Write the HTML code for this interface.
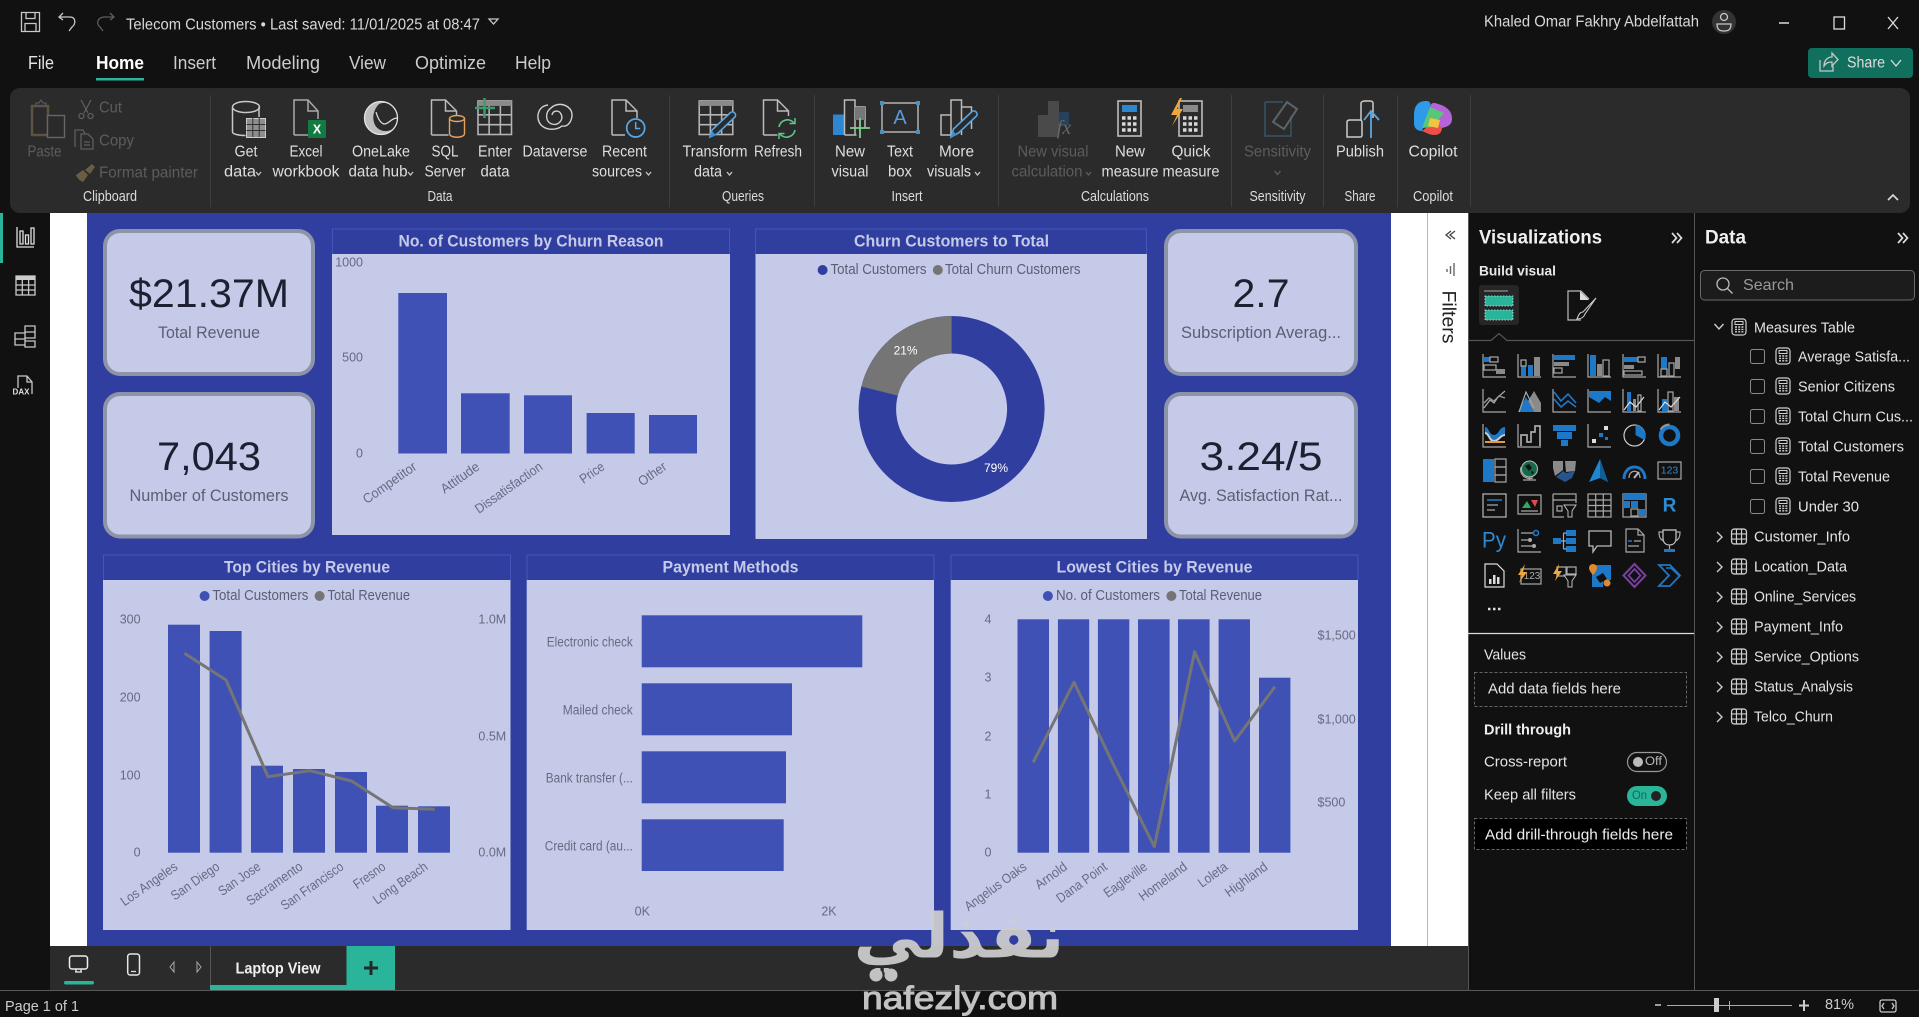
<!DOCTYPE html>
<html lang="en"><head><meta charset="utf-8"><title>Telecom Customers - Power BI</title>
<style>
html,body{margin:0;padding:0;width:1919px;height:1017px;overflow:hidden;background:#111;font-family:"Liberation Sans",sans-serif}
.a{position:absolute}
svg{position:absolute;left:0;top:0}
text{font-family:"Liberation Sans","DejaVu Sans",sans-serif;dominant-baseline:central;fill:#e4e4e4;font-size:15px}
.m{text-anchor:middle}.e{text-anchor:end}.b{font-weight:bold}
.r{font-size:15.5px;fill:#dedede}.d{fill:#5c5c5c}.gl{font-size:14.5px;fill:#dcdcdc}
.t{font-size:17px;font-weight:bold;fill:#c5cae9;text-anchor:middle;translate:0 1px}
.ax{font-size:12.5px;fill:#666b80}.ax[textLength]{font-size:13.5px}.lg{font-size:14.5px;fill:#5a5f75}
.v{font-size:40px;fill:#1c2030;text-anchor:middle;translate:0 1px}.l{font-size:16.5px;fill:#5a5f73;text-anchor:middle;translate:0 1px}
.bar{fill:#3f51b5}.ln{fill:none;stroke:#757575;stroke-width:3;stroke-linejoin:round}
.s{fill:none;stroke:#c8c8c8;stroke-width:1.3}.sd{fill:none;stroke:#5e5e5e;stroke-width:1.3}
.g{fill:none;stroke:#a8a8a8;stroke-width:1.2}.bl{fill:#1e78c8}.gr{fill:#8a8a8a}.bs{fill:none;stroke:#1e78c8;stroke-width:1.6}
</style></head><body>
<div class="a" style="left:10px;top:88px;width:1900px;height:125px;background:#2b2b2b;border-radius:10px"></div>
<div class="a" style="left:50px;top:213px;width:1418px;height:733px;background:#fff"></div>
<div class="a" style="left:87px;top:213px;width:1304px;height:733px;background:#303f9f"></div>
<div class="a" style="left:1427px;top:213px;width:1px;height:733px;background:#b5b5b5"></div>
<div class="a" style="left:50px;top:946px;width:1418px;height:44px;background:#2b2b2b"></div>
<div class="a" style="left:0;top:990px;width:1919px;height:1px;background:#5a5a5a"></div>
<div class="a" style="left:1468px;top:213px;width:1px;height:777px;background:#555"></div>
<div class="a" style="left:1694px;top:213px;width:1px;height:777px;background:#555"></div>
<div class="a" style="left:0;top:213px;width:3px;height:50px;background:#2ab59b"></div>
<div class="a" style="left:1808px;top:48px;width:105px;height:30px;background:#10705d;border-radius:4px"></div>

<svg width="1919" height="1017" viewBox="0 0 1919 1017" xmlns="http://www.w3.org/2000/svg">
<defs>
<symbol id="calc" viewBox="0 0 16 18"><rect x="1" y="1" width="14" height="16" rx="3" fill="none" stroke="#d0d0d0" stroke-width="1.2"/><rect x="4" y="3.5" width="8" height="3" fill="none" stroke="#d0d0d0"/><path d="M4 9h2M7.2 9h2M10.4 9h2M4 11.4h2M7.2 11.4h2M10.4 11.4h2M4 13.8h2M7.2 13.8h2M10.4 13.8h2" stroke="#d0d0d0" stroke-width="1.4"/></symbol>
<symbol id="tbl" viewBox="0 0 16 16"><rect x="1" y="1" width="14" height="14" rx="2.5" fill="none" stroke="#d0d0d0" stroke-width="1.2"/><path d="M5.6 1v14M10.4 1v14M1 5.6h14M1 10.4h14" stroke="#d0d0d0" stroke-width="1.1"/></symbol>
<symbol id="rib-table" viewBox="0 0 36 36"><rect x="1" y="1" width="34" height="34" fill="none" stroke="#b5b5b5" stroke-width="1.6"/><rect x="1" y="1" width="34" height="5" fill="#8a8a8a"/><path d="M12.3 6v29M23.7 6v29M1 15h34M1 25h34" stroke="#b5b5b5" stroke-width="1.6"/></symbol>
</defs>

<!-- title bar -->
<path class="s" d="M21.5 12.5h18v19h-18zM26 12.5v6h9v-6M25 31.500v-8h11v8"/>
<path class="s" d="M63 13l-4 4 4 3M59 17h11c6 0 6 7 2 10l-3 4" stroke-width="1.4"/>
<path class="sd" d="M110 13l4 4-4 3M114 17h-9c-8 0-9 7-5 10l3 4" stroke-width="1.4"/>
<text x="126" y="25" textLength="354" lengthAdjust="spacingAndGlyphs" style="font-size:15.5px;fill:#d8d8d8">Telecom Customers • Last saved: 11/01/2025 at 08:47</text>
<path class="s" d="M489 19h9l-4.500 5z"/>
<text x="1484" y="22" textLength="215" lengthAdjust="spacingAndGlyphs" style="font-size:15.5px;fill:#d8d8d8">Khaled Omar Fakhry Abdelfattah</text>
<circle cx="1724" cy="22" r="12" fill="#333"/><circle cx="1724" cy="17" r="3.500" class="s"/><path class="s" d="M1717 24h14c0 6-3 7-7 7s-7-1-7-7z"/>
<path d="M1779 23h10" stroke="#ddd" stroke-width="1.500"/><rect x="1834" y="17" width="10.500" height="12" class="s" style="stroke:#ddd"/>
<path d="M1888 17l10 12M1898 17l-10 12" stroke="#ddd" stroke-width="1.300"/>
<text x="28" y="63" textLength="26" lengthAdjust="spacingAndGlyphs" style="font-size:18px">File</text>
<text x="96" y="63" textLength="48" lengthAdjust="spacingAndGlyphs" class="b" style="font-size:18px;fill:#fff">Home</text>
<text x="173" y="63" textLength="43" lengthAdjust="spacingAndGlyphs" style="font-size:18px;fill:#ccc">Insert</text>
<text x="246" y="63" textLength="74" lengthAdjust="spacingAndGlyphs" style="font-size:18px;fill:#ccc">Modeling</text>
<text x="349" y="63" textLength="37" lengthAdjust="spacingAndGlyphs" style="font-size:18px;fill:#ccc">View</text>
<text x="415" y="63" textLength="71" lengthAdjust="spacingAndGlyphs" style="font-size:18px;fill:#ccc">Optimize</text>
<text x="515" y="63" textLength="36" lengthAdjust="spacingAndGlyphs" style="font-size:18px;fill:#ccc">Help</text>
<rect x="96" y="78" width="48" height="2.500" fill="#2ab59b"/>
<path d="M1820 60v11h13v-5M1824 66c0-6 4-9 8-9v-4l6 6.500-6 6.500v-4c-4 0-6 1-8 4z" class="s"/>
<text x="1847" y="63" textLength="38" lengthAdjust="spacingAndGlyphs" style="font-size:15.5px;fill:#ddd">Share</text>
<path d="M1891 60l5 6 5-6" class="s" style="stroke:#ddd"/>

<!-- ribbon separators -->
<path d="M210.500 95v112M669.500 95v112M814.500 95v112M998.500 95v112M1231.500 95v112M1323.500 95v112M1397.500 95v112M1470.500 95v112" stroke="#3f3f3f"/>

<!-- clipboard -->
<rect x="32" y="106" width="16" height="29" fill="none" stroke="#5e5240" stroke-width="2.500"/><path d="M36 106v-3h3l2-3 2 3h3v3z" fill="none" stroke="#555" stroke-width="1.300"/><rect x="47.500" y="115.500" width="17" height="22" fill="#2b2b2b" stroke="#666" stroke-width="1.400"/>
<path class="sd" d="M81 100l7 13M91 100l-7 13"/><circle cx="81.500" cy="116" r="2.500" class="sd"/><circle cx="90.500" cy="116" r="2.500" class="sd"/>
<path class="sd" d="M75 147v-17h8l2 4M81 134h7l5 5v10H81zM84 142h6M84 145h6"/>
<path d="M76 175l7-5 5 5-5 7c-3-1-6-4-7-7zM85 170l7-6 3 3-5 7z" fill="#6b5c45"/>
<text x="44.500" y="152" class="r d m" textLength="34" lengthAdjust="spacingAndGlyphs">Paste</text>
<text x="99" y="108" class="r d" textLength="23" lengthAdjust="spacingAndGlyphs">Cut</text>
<text x="99" y="141" class="r d" textLength="35" lengthAdjust="spacingAndGlyphs">Copy</text>
<text x="99" y="173" class="r d" textLength="99" lengthAdjust="spacingAndGlyphs">Format painter</text>
<text x="110" y="197" class="gl m" textLength="54" lengthAdjust="spacingAndGlyphs">Clipboard</text>

<!-- data group -->
<path class="s" d="M232.500 107v25c0 2 6 3.500 13 3.500M259 107v10" style="stroke-width:1.500"/><ellipse cx="246" cy="107" rx="13.500" ry="5.500" class="s" style="stroke-width:1.500"/>
<rect x="246.500" y="118.500" width="19" height="19" fill="#8d8d8d" stroke="#ccc"/><path d="M252.800 118v19M259.200 118v19M246.500 124.500h19M246.500 130.500h19" stroke="#333"/>
<path d="M294 135v-35h14l10 11v8M294 135h14M308 100v11h10" fill="none" stroke="#aaa" stroke-width="1.500"/>
<rect x="308" y="120" width="18" height="18" rx="1" fill="#107c41"/><text x="317" y="129.500" class="b m" style="font-size:12.500px;fill:#fff">X</text>
<circle cx="381" cy="118" r="17" fill="#bdbdbd"/><path d="M378 105c-5 6-6 14-3 20 4 7 13 8 19 3 3-3 4-6 4-10 0-8-6-14-13-15-3 0-5 0-7 2z" fill="#2b2b2b"/><path d="M376 112c2 7 5 12 9 12 5-1 6-6 13-6" fill="none" stroke="#dcdcdc" stroke-width="1.300"/><circle cx="381" cy="118" r="16.500" fill="none" stroke="#e4e4e4" stroke-width="1.300"/>
<path d="M431.500 135v-35h14l11 11v5M431.500 135h17M445.500 100v11h11" fill="none" stroke="#bbb" stroke-width="1.500"/>
<ellipse cx="457" cy="118.500" rx="7.500" ry="3" fill="none" stroke="#e3a35c" stroke-width="1.400"/><path d="M449.500 118.500v15c0 5 15 5 15 0v-15" fill="none" stroke="#e3a35c" stroke-width="1.400"/>
<use href="#rib-table" x="477" y="100" width="35.500" height="35.500"/>
<path d="M484.500 98v20M475 108h20" stroke="#3c9a6b" stroke-width="2.500"/>
<path d="M548 105C538 106 535 118 541 125C547 131 557 130 562 126C570 128 575 115 570 109C565 103 556 103 551 108C545 112 545 122 552 124C558 126 564 120 561 114C559 110 553 110 552 115" fill="none" stroke="#d0d0d0" stroke-width="1.400"/>
<path d="M612 135v-35h14l11 11v7M612 135h13M626 100v11h11" fill="none" stroke="#bbb" stroke-width="1.500"/>
<circle cx="635.700" cy="128" r="9" fill="#2b2b2b" stroke="#58a7e6" stroke-width="1.700"/><path d="M635.700 122v6.500h4.500" stroke="#58a7e6" fill="none" stroke-width="1.500"/>
<text x="246" y="152" class="r m" textLength="23" lengthAdjust="spacingAndGlyphs">Get</text>
<text x="240" y="172" class="r m" textLength="32" lengthAdjust="spacingAndGlyphs">data</text>
<text x="306" y="152" class="r m" textLength="33" lengthAdjust="spacingAndGlyphs">Excel</text>
<text x="306" y="172" class="r m" textLength="67" lengthAdjust="spacingAndGlyphs">workbook</text>
<text x="381" y="152" class="r m" textLength="58" lengthAdjust="spacingAndGlyphs">OneLake</text>
<text x="378" y="172" class="r m" textLength="59" lengthAdjust="spacingAndGlyphs">data hub</text>
<text x="445" y="152" class="r m" textLength="27" lengthAdjust="spacingAndGlyphs">SQL</text>
<text x="445" y="172" class="r m" textLength="41" lengthAdjust="spacingAndGlyphs">Server</text>
<text x="495" y="152" class="r m" textLength="34" lengthAdjust="spacingAndGlyphs">Enter</text>
<text x="495" y="172" class="r m" textLength="29" lengthAdjust="spacingAndGlyphs">data</text>
<text x="555" y="152" class="r m" textLength="65" lengthAdjust="spacingAndGlyphs">Dataverse</text>
<text x="624.500" y="152" class="r m" textLength="45" lengthAdjust="spacingAndGlyphs">Recent</text>
<text x="617" y="172" class="r m" textLength="50" lengthAdjust="spacingAndGlyphs">sources</text>
<path class="s" d="M256 172l2.500 3 2.500-3M408 172l2.500 3 2.500-3M646 172l2.500 3 2.500-3M727 172l2.500 3 2.500-3M975 172l2.500 3 2.500-3"/>
<text x="440" y="197" class="gl m" textLength="25" lengthAdjust="spacingAndGlyphs">Data</text>

<!-- queries -->
<use href="#rib-table" x="698" y="100" width="36" height="35.500"/>
<path d="M710 137l2-7 18-17c3-3 7 1 5 4l-18 17z" fill="#2b2b2b" stroke="#58a7e6" stroke-width="1.600"/><path d="M710 137l2-6 4 4z" fill="#3a8fd6"/>
<path d="M763.500 135v-35h14l11 11v5M763.500 135h14M777.500 100v11h11" fill="none" stroke="#bbb" stroke-width="1.500"/>
<path d="M779 127a8.500 8.500 0 0 1 15-4M795 130a8.500 8.500 0 0 1-15 4" fill="none" stroke="#5dc48a" stroke-width="1.700"/><path d="M795 118v5.500h-5.500M779 139v-5.500h5.500" fill="none" stroke="#5dc48a" stroke-width="1.500"/>
<text x="715" y="152" class="r m" textLength="65" lengthAdjust="spacingAndGlyphs">Transform</text>
<text x="708" y="172" class="r m" textLength="28" lengthAdjust="spacingAndGlyphs">data</text>
<text x="778" y="152" class="r m" textLength="48" lengthAdjust="spacingAndGlyphs">Refresh</text>
<text x="743" y="197" class="gl m" textLength="42" lengthAdjust="spacingAndGlyphs">Queries</text>

<!-- insert -->
<rect x="833" y="114.500" width="11" height="20.500" fill="#2c86d1"/><path d="M844.500 135v-35h10.500v35M855 107h10v21M844.500 135h12" fill="none" stroke="#bbb" stroke-width="1.500"/><rect x="855" y="107" width="10" height="13" fill="#777"/><path d="M860 118v20M850 128h20" stroke="#7fd08f" stroke-width="1.800"/>
<rect x="882" y="103" width="36" height="29" fill="none" stroke="#c8c8c8" stroke-width="1.300"/><text x="900" y="118" class="m" style="font-size:20px;fill:#5a9ad8">A</text>
<g fill="#4a8fc4"><rect x="880" y="101" width="4" height="4"/><rect x="916" y="101" width="4" height="4"/><rect x="880" y="130" width="4" height="4"/><rect x="916" y="130" width="4" height="4"/></g>
<path d="M951 135h-10v-20h10M951 135v-35h10.500v35M961.500 107h10v22" fill="none" stroke="#bbb" stroke-width="1.500"/><path d="M951 137l2.500-8 18-17c3-3 7 1 5 4l-18 17z" fill="#2b2b2b" stroke="#58a7e6" stroke-width="1.600"/><path d="M951 137l2-6 4 4z" fill="#3a8fd6"/>
<text x="850" y="152" class="r m" textLength="30" lengthAdjust="spacingAndGlyphs">New</text>
<text x="850" y="172" class="r m" textLength="37" lengthAdjust="spacingAndGlyphs">visual</text>
<text x="900" y="152" class="r m" textLength="26" lengthAdjust="spacingAndGlyphs">Text</text>
<text x="900" y="172" class="r m" textLength="24" lengthAdjust="spacingAndGlyphs">box</text>
<text x="956.500" y="152" class="r m" textLength="35" lengthAdjust="spacingAndGlyphs">More</text>
<text x="949" y="172" class="r m" textLength="44" lengthAdjust="spacingAndGlyphs">visuals</text>
<text x="907" y="197" class="gl m" textLength="31" lengthAdjust="spacingAndGlyphs">Insert</text>

<!-- calculations -->
<path d="M1038 137v-22h10v22zM1048 137v-36h11v36z" fill="#4a4a4a"/><rect x="1059" y="112" width="10" height="14" fill="#26415c"/><text x="1064" y="128" style="font-size:20px;font-family:'Liberation Serif',serif;font-style:italic;fill:#666" class="m">fx</text>
<rect x="1118" y="101" width="23" height="35" fill="none" stroke="#bdbdbd" stroke-width="1.600"/><rect x="1122" y="105" width="15" height="7" fill="#2c86d1"/><path d="M1122 118h15M1122 124h15M1122 130h15" stroke="#d8d8d8" stroke-width="3.500" stroke-dasharray="3.500 2"/>
<rect x="1179" y="101" width="23" height="35" fill="none" stroke="#bdbdbd" stroke-width="1.600"/><rect x="1183" y="105" width="15" height="7" fill="#8a8a8a"/><path d="M1183 118h15M1183 124h15M1183 130h15" stroke="#d8d8d8" stroke-width="3.500" stroke-dasharray="3.500 2"/>
<path d="M1180 98l-9 17h6l-5 11 11-17h-6l5-11z" fill="#f0a73a"/>
<text x="1053" y="152" class="r d m" textLength="71" lengthAdjust="spacingAndGlyphs">New visual</text>
<text x="1047" y="172" class="r d m" textLength="71" lengthAdjust="spacingAndGlyphs">calculation</text>
<path class="sd" d="M1086 172l2.500 3 2.500-3"/>
<text x="1130" y="152" class="r m" textLength="30" lengthAdjust="spacingAndGlyphs">New</text>
<text x="1130" y="172" class="r m" textLength="57" lengthAdjust="spacingAndGlyphs">measure</text>
<text x="1191" y="152" class="r m" textLength="39" lengthAdjust="spacingAndGlyphs">Quick</text>
<text x="1191" y="172" class="r m" textLength="57" lengthAdjust="spacingAndGlyphs">measure</text>
<text x="1115" y="197" class="gl m" textLength="68" lengthAdjust="spacingAndGlyphs">Calculations</text>

<!-- sensitivity / publish / copilot -->
<path d="M1265 102h18M1265 102v34h26v-20" fill="none" stroke="#35505f" stroke-width="1.700"/><path d="M1273 122l14-20 10 7-13 20z" fill="none" stroke="#5d6469" stroke-width="2"/>
<text x="1277.500" y="152" class="r d m" textLength="67" lengthAdjust="spacingAndGlyphs">Sensitivity</text>
<path class="sd" d="M1274.500 171l3 3.500 3-3.500"/>
<text x="1277.500" y="197" class="gl m" textLength="56" lengthAdjust="spacingAndGlyphs">Sensitivity</text>
<path class="s" d="M1361 120v-17c0-1 2-2 4-2h5c2 0 3 1 3 2v15M1347 137v-15c0-2 2-2 3-2h10c1 0 2 1 2 2v13c0 2-1 2-2 2h-13z" style="stroke:#ccc;stroke-width:1.500"/>
<path d="M1371 138v-26M1364 120l7-9 8 9" fill="none" stroke="#5ea7df" stroke-width="1.800"/>
<text x="1360" y="152" class="r m" textLength="48" lengthAdjust="spacingAndGlyphs">Publish</text>
<text x="1360" y="197" class="gl m" textLength="31" lengthAdjust="spacingAndGlyphs">Share</text>
<path d="M1426 101c-8 0-12 5-12 14v8c0 6 4 8 8 8l8-24c1-4 0-6-4-6z" fill="#2e9bea"/><path d="M1422 131c5 2 8 4 12 4 6 0 8-3 8-8l-7-6z" fill="#f04f45"/><path d="M1430 107c1-4 3-5 8-3 8 2 14 7 14 14 0 6-2 8-10 10l-7-6z" fill="#b563d8"/><path d="M1422 128l8-21 14 6-12 14z" fill="#58c878"/><path d="M1430 118l10 2-2 8-10-2z" fill="#f5c344"/>
<text x="1433" y="152" class="r m" textLength="49" lengthAdjust="spacingAndGlyphs">Copilot</text>
<text x="1433" y="197" class="gl m" textLength="40" lengthAdjust="spacingAndGlyphs">Copilot</text>
<path d="M1888 200l5-5 5 5" fill="none" stroke="#ddd" stroke-width="1.600"/>

<!-- left rail -->
<path d="M17 227v20h17M20 244v-13h3v13zM25.500 244v-9h3v9zM31 244v-16h3v16z" class="s" style="stroke:#e0e0e0"/>
<rect x="16" y="276" width="19" height="19" class="s"/><rect x="16" y="276" width="19" height="4" fill="#ccc"/><path d="M22.300 280v15M28.600 280v15M16 285h19M16 290h19" class="s"/>
<path d="M25 326h10v6h-10zM25 332h10v6h-10zM15 333h10v6h-10zM15 339h10v6h-10zM25 341h10v6h-10z" class="s"/>
<path d="M18 388v-12h9l5 6v12M27 376v6h5" class="s"/><text x="21" y="392" class="b m" style="font-size:8px;fill:#e0e0e0">DAX</text>

<!-- CANVAS -->
<g fill="#c5cae9" stroke="#8e94a8" stroke-width="4">
<rect x="105" y="231" width="208" height="143" rx="15"/><rect x="105" y="394" width="208" height="142.500" rx="15"/>
<rect x="1166" y="231" width="190" height="143" rx="15"/><rect x="1166" y="394" width="190" height="142.500" rx="15"/>
</g>
<text x="209" y="293" class="v" textLength="160" lengthAdjust="spacingAndGlyphs">$21.37M</text>
<text x="209" y="332" class="l" textLength="102" lengthAdjust="spacingAndGlyphs">Total Revenue</text>
<text x="209" y="456" class="v" textLength="104" lengthAdjust="spacingAndGlyphs">7,043</text>
<text x="209" y="495" class="l" textLength="159" lengthAdjust="spacingAndGlyphs">Number of Customers</text>
<text x="1261" y="293" class="v" textLength="57" lengthAdjust="spacingAndGlyphs">2.7</text>
<text x="1261" y="332" class="l" textLength="160" lengthAdjust="spacingAndGlyphs">Subscription Averag...</text>
<text x="1261" y="456" class="v" textLength="123" lengthAdjust="spacingAndGlyphs">3.24/5</text>
<text x="1261" y="495" class="l" textLength="163" lengthAdjust="spacingAndGlyphs">Avg. Satisfaction Rat...</text>

<!-- chart bodies -->
<g fill="#c5cae9">
<rect x="332" y="254" width="398" height="281"/><rect x="755.500" y="254" width="391.500" height="285"/>
<rect x="103" y="580" width="407.500" height="350"/><rect x="526.700" y="580" width="407.300" height="350"/><rect x="950.700" y="580" width="407.300" height="350"/>
</g>
<g fill="none" stroke="#4454bb" stroke-width="1">
<path d="M332.500 254v-25h397v25M755.500 254v-25h391v25M103.500 580v-25h407v25M527 580v-25h407v25M951 580v-25h407v25"/>
</g>
<text x="531" y="240" class="t" textLength="265" lengthAdjust="spacingAndGlyphs">No. of Customers by Churn Reason</text>
<text x="951.500" y="240" class="t" textLength="195" lengthAdjust="spacingAndGlyphs">Churn Customers to Total</text>
<text x="307" y="566" class="t" textLength="166" lengthAdjust="spacingAndGlyphs">Top Cities by Revenue</text>
<text x="730.500" y="566" class="t" textLength="136" lengthAdjust="spacingAndGlyphs">Payment Methods</text>
<text x="1154.500" y="566" class="t" textLength="196" lengthAdjust="spacingAndGlyphs">Lowest Cities by Revenue</text>

<!-- chart 1 -->
<g class="bar"><rect x="398.300" y="293" width="48.700" height="160.500"/><rect x="461" y="393.300" width="48.700" height="60.200"/><rect x="524" y="395.300" width="48" height="58.200"/><rect x="586.600" y="413" width="48.100" height="40.500"/><rect x="649" y="415" width="48" height="38.500"/></g>
<text x="363" y="262.700" class="ax e">1000</text><text x="363" y="357.700" class="ax e">500</text><text x="363" y="453.700" class="ax e">0</text>
<text class="ax e" x="415" y="465" transform="rotate(-35 415 465)" textLength="62" lengthAdjust="spacingAndGlyphs">Competitor</text>
<text class="ax e" x="478" y="465" transform="rotate(-35 478 465)" textLength="44" lengthAdjust="spacingAndGlyphs">Attitude</text>
<text class="ax e" x="541" y="465" transform="rotate(-35 541 465)" textLength="79" lengthAdjust="spacingAndGlyphs">Dissatisfaction</text>
<text class="ax e" x="603" y="465" transform="rotate(-35 603 465)" textLength="27" lengthAdjust="spacingAndGlyphs">Price</text>
<text class="ax e" x="665" y="465" transform="rotate(-35 665 465)" textLength="31" lengthAdjust="spacingAndGlyphs">Other</text>

<!-- donut -->
<circle cx="822.600" cy="270" r="5" fill="#303f9f"/><text x="830.500" y="270" class="lg" textLength="96" lengthAdjust="spacingAndGlyphs">Total Customers</text>
<circle cx="937.800" cy="270" r="5" fill="#757575"/><text x="945" y="270" class="lg" textLength="135.500" lengthAdjust="spacingAndGlyphs">Total Churn Customers</text>
<circle cx="951.600" cy="409" r="74.250" fill="none" stroke="#303f9f" stroke-width="37.500"/>
<path d="M951.600 316A93 93 0 0 0 861.360 386.500L897.750 395.600A55.500 55.500 0 0 1 951.600 353.500Z" fill="#757575"/>
<text x="905.600" y="350.700" class="m" style="font-size:12px;fill:#fff">21%</text>
<text x="996" y="468" class="m" style="font-size:12px;fill:#fff">79%</text>

<!-- chart top cities -->
<circle cx="204.600" cy="596" r="5" fill="#3f51b5"/><text x="212.400" y="596" class="lg" textLength="96" lengthAdjust="spacingAndGlyphs">Total Customers</text>
<circle cx="319.600" cy="596" r="5" fill="#757575"/><text x="327.500" y="596" class="lg" textLength="82.500" lengthAdjust="spacingAndGlyphs">Total Revenue</text>
<g class="bar"><rect x="168" y="624.700" width="32" height="228"/><rect x="209.600" y="631" width="32" height="221.700"/><rect x="251" y="765.700" width="32" height="87"/><rect x="293" y="769" width="32" height="83.700"/><rect x="335" y="772" width="32" height="80.700"/><rect x="376" y="805.700" width="32" height="47"/><rect x="418" y="806.300" width="32" height="46.400"/></g>
<polyline class="ln" points="184.400,653.300 226,680 268,776.700 310,770.700 351.600,781 393,807.700 434.700,809.300"/>
<text x="140.600" y="619.700" class="ax e">300</text><text x="140.600" y="697.700" class="ax e">200</text><text x="140.600" y="775.700" class="ax e">100</text><text x="140.600" y="852.700" class="ax e">0</text>
<text x="478.400" y="619.700" class="ax">1.0M</text><text x="478.400" y="736.700" class="ax">0.5M</text><text x="478.400" y="852.700" class="ax">0.0M</text>
<text class="ax e" x="176" y="865" transform="rotate(-35 176 865)" textLength="66" lengthAdjust="spacingAndGlyphs">Los Angeles</text>
<text class="ax e" x="218" y="865" transform="rotate(-35 218 865)" textLength="56" lengthAdjust="spacingAndGlyphs">San Diego</text>
<text class="ax e" x="259" y="865" transform="rotate(-35 259 865)" textLength="48" lengthAdjust="spacingAndGlyphs">San Jose</text>
<text class="ax e" x="301" y="865" transform="rotate(-35 301 865)" textLength="65" lengthAdjust="spacingAndGlyphs">Sacramento</text>
<text class="ax e" x="342" y="865" transform="rotate(-35 342 865)" textLength="73" lengthAdjust="spacingAndGlyphs">San Francisco</text>
<text class="ax e" x="384" y="865" transform="rotate(-35 384 865)" textLength="36" lengthAdjust="spacingAndGlyphs">Fresno</text>
<text class="ax e" x="426" y="865" transform="rotate(-35 426 865)" textLength="63" lengthAdjust="spacingAndGlyphs">Long Beach</text>

<!-- payment -->
<g class="bar"><rect x="641.700" y="615.300" width="220.600" height="52"/><rect x="641.700" y="683.300" width="150.300" height="52"/><rect x="641.700" y="751.300" width="144.300" height="52"/><rect x="641.700" y="819.300" width="142" height="51.700"/></g>
<text x="632.800" y="642" class="ax e" textLength="86" lengthAdjust="spacingAndGlyphs">Electronic check</text>
<text x="632.800" y="710" class="ax e" textLength="70" lengthAdjust="spacingAndGlyphs">Mailed check</text>
<text x="632.800" y="778" class="ax e" textLength="87" lengthAdjust="spacingAndGlyphs">Bank transfer (...</text>
<text x="632.800" y="846" class="ax e" textLength="88" lengthAdjust="spacingAndGlyphs">Credit card (au...</text>
<text x="642.300" y="911.700" class="ax m">0K</text><text x="829" y="911.700" class="ax m">2K</text>

<!-- lowest -->
<circle cx="1047.900" cy="596" r="5" fill="#3f51b5"/><text x="1056" y="596" class="lg" textLength="104" lengthAdjust="spacingAndGlyphs">No. of Customers</text>
<circle cx="1171.400" cy="596" r="5" fill="#757575"/><text x="1179" y="596" class="lg" textLength="83" lengthAdjust="spacingAndGlyphs">Total Revenue</text>
<g class="bar"><rect x="1017.500" y="619.300" width="31.500" height="233.400"/><rect x="1057.900" y="619.300" width="31.300" height="233.400"/><rect x="1097.900" y="619.300" width="31.400" height="233.400"/><rect x="1138" y="619.300" width="31.600" height="233.400"/><rect x="1178" y="619.300" width="31.600" height="233.400"/><rect x="1218.600" y="619.300" width="31.400" height="233.400"/><rect x="1259" y="677.700" width="31.400" height="175"/></g>
<polyline class="ln" points="1033.200,762.300 1074,682.300 1113.600,765 1154.300,846.700 1194.600,651.700 1234.600,741 1275,686.700"/>
<text x="991.400" y="619.300" class="ax e">4</text><text x="991.400" y="677.700" class="ax e">3</text><text x="991.400" y="736.700" class="ax e">2</text><text x="991.400" y="794.700" class="ax e">1</text><text x="991.400" y="852.700" class="ax e">0</text>
<text x="1317.500" y="635.300" class="ax">$1,500</text><text x="1317.500" y="719.300" class="ax">$1,000</text><text x="1317.500" y="802.300" class="ax">$500</text>
<text class="ax e" x="1025" y="865" transform="rotate(-36 1025 865)" textLength="73" lengthAdjust="spacingAndGlyphs">Angelus Oaks</text>
<text class="ax e" x="1065.500" y="865" transform="rotate(-36 1065.500 865)" textLength="36" lengthAdjust="spacingAndGlyphs">Arnold</text>
<text class="ax e" x="1105.500" y="865" transform="rotate(-36 1105.500 865)" textLength="59" lengthAdjust="spacingAndGlyphs">Dana Point</text>
<text class="ax e" x="1145.500" y="865" transform="rotate(-36 1145.500 865)" textLength="50" lengthAdjust="spacingAndGlyphs">Eagleville</text>
<text class="ax e" x="1185.500" y="865" transform="rotate(-36 1185.500 865)" textLength="56" lengthAdjust="spacingAndGlyphs">Homeland</text>
<text class="ax e" x="1226" y="865" transform="rotate(-36 1226 865)" textLength="33" lengthAdjust="spacingAndGlyphs">Loleta</text>
<text class="ax e" x="1266" y="865" transform="rotate(-36 1266 865)" textLength="49" lengthAdjust="spacingAndGlyphs">Highland</text>

<!-- filters -->
<path d="M1451 231l-5 4 5 4M1455 231l-5 4 5 4" fill="none" stroke="#444" stroke-width="1.300"/>
<path d="M1447 272v-3M1450.500 274v-8M1454 276v-13" stroke="#666" stroke-width="1.400"/>
<text x="1448" y="317" transform="rotate(90 1448 317)" class="m" textLength="53" lengthAdjust="spacingAndGlyphs" style="font-size:19px;fill:#222">Filters</text>

<!-- tab bar -->
<rect x="69.500" y="956" width="18" height="13" rx="2.500" fill="none" stroke="#eee" stroke-width="1.500"/><path d="M75 972h7M76 969v3M81 969v3" stroke="#eee" stroke-width="1.300"/><rect x="64" y="981" width="30" height="3.500" rx="1.700" fill="#2ab59b"/>
<rect x="127.700" y="954" width="11.800" height="21" rx="2.500" fill="none" stroke="#e6e6e6" stroke-width="1.500"/><path d="M131 971.500h5" stroke="#ddd" stroke-width="1.300"/>
<path d="M174 962l-4 5 4 5zM197 962l4 5-4 5z" fill="none" stroke="#aaa"/>
<rect x="210" y="946" width="136.500" height="44" fill="#2b2b2b"/><path d="M210.500 946v44" stroke="#555"/><rect x="210" y="985" width="136.500" height="5" fill="#2ab59b"/>
<text x="278" y="969" class="b m" textLength="85" lengthAdjust="spacingAndGlyphs" style="font-size:15.5px;fill:#eee">Laptop View</text>
<rect x="346.500" y="946" width="48.500" height="44" fill="#2ab59b"/><path d="M371 961v14M364 968h14" stroke="#1f2a2a" stroke-width="3"/>

<!-- bottom -->
<text x="5" y="1007" textLength="74" lengthAdjust="spacingAndGlyphs" style="font-size:14.5px;fill:#ccc">Page 1 of 1</text>
<path d="M1655 1005h6" stroke="#ccc" stroke-width="1.500"/><path d="M1667 1005.500h125M1729.500 1001v9" stroke="#aaa"/><rect x="1714" y="998" width="5" height="14" fill="#ccc"/>
<path d="M1799 1005.500h10M1804 1000v11" stroke="#ccc" stroke-width="2"/>
<text x="1825" y="1005" textLength="29" lengthAdjust="spacingAndGlyphs" style="font-size:14.5px;fill:#ccc">81%</text>
<rect x="1880" y="1000" width="16" height="12" rx="2" class="s"/><path d="M1884 1003l-2 3 2 3M1892 1003l2 3-2 3" class="s"/>

<!-- viz panel -->
<text x="1479" y="238" class="b" textLength="123" lengthAdjust="spacingAndGlyphs" style="font-size:19px;fill:#f0f0f0">Visualizations</text>
<path d="M1672 233l4.500 5-4.500 5M1677 233l4.500 5-4.500 5" fill="none" stroke="#ddd" stroke-width="1.700"/>
<text x="1705" y="238" class="b" textLength="41" lengthAdjust="spacingAndGlyphs" style="font-size:19px;fill:#f0f0f0">Data</text>
<path d="M1898 233l4.500 5-4.500 5M1903 233l4.500 5-4.500 5" fill="none" stroke="#ddd" stroke-width="1.700"/>
<text x="1479" y="271" class="b" textLength="77" lengthAdjust="spacingAndGlyphs" style="font-size:13.500px;fill:#e8e8e8">Build visual</text>
<rect x="1479" y="285" width="40" height="40" rx="3" fill="#262626"/><path d="M1484 291h24" stroke="#aaa"/><rect x="1485" y="296" width="28" height="10" fill="#2ab59b" stroke="#cfeee6" stroke-dasharray="1.500 1.500" stroke-width=".8"/><rect x="1485" y="310" width="28" height="10" fill="#2ab59b" stroke="#cfeee6" stroke-dasharray="1.500 1.500" stroke-width=".8"/>
<path d="M1581 320h-13v-29h13l8 8" fill="none" stroke="#bbb" stroke-width="1.200"/><path d="M1580 291v9h9z" fill="#ddd"/><path d="M1577 319c2-5 3-7 6-7l13-14-11 16c-1 3-4 5-8 5z" fill="none" stroke="#ccc" stroke-width="1.100"/>
<path d="M1468 340.500h23l8-7 8 7h187" fill="none" stroke="#555" stroke-width="1.200"/>
<path d="M1468 633.500h226" stroke="#ddd" stroke-width="1.200"/>

<!-- viz icon grid -->
<g transform="translate(1483,354)"><path class="g" d="M0 0v23h23"/><rect x="1" y="3" width="6" height="5" class="bl"/><rect x="7" y="3" width="8" height="5" class="g"/><rect x="1" y="11" width="12" height="5" class="g"/><rect x="13" y="15" width="9" height="5" class="gr"/></g>
<g transform="translate(1518,354)"><path class="g" d="M0 0v23h23"/><rect x="3" y="12" width="5" height="10" class="bl"/><rect x="3" y="6" width="5" height="6" class="g"/><rect x="10" y="11" width="5" height="11" class="bl"/><rect x="16" y="3" width="6" height="19" class="gr"/></g>
<g transform="translate(1553,354)"><path class="g" d="M0 0v23h23"/><rect x="1" y="1" width="21" height="5" class="bl"/><rect x="1" y="8" width="15" height="4" class="gr"/><rect x="1" y="14" width="8" height="5" class="g"/></g>
<g transform="translate(1588,354)"><path class="g" d="M0 0v23h23"/><rect x="2" y="1" width="6" height="21" class="bl"/><rect x="9" y="10" width="5" height="12" class="gr"/><rect x="15" y="6" width="6" height="16" class="g"/></g>
<g transform="translate(1623,354)"><path class="g" d="M0 0v23h23"/><rect x="1" y="3" width="14" height="5" class="bl"/><rect x="15" y="3" width="7" height="5" class="g"/><rect x="1" y="11" width="10" height="4" class="gr"/><rect x="1" y="17" width="18" height="4" class="g"/></g>
<g transform="translate(1658,354)"><path class="g" d="M0 0v23h23"/><rect x="3" y="3" width="6" height="12" class="bl"/><rect x="3" y="15" width="6" height="7" class="g"/><rect x="11" y="9" width="5" height="13" class="g"/><rect x="17" y="3" width="5" height="12" class="gr"/></g>

<g transform="translate(1483,389)"><path class="g" d="M0 0v23h23M1 19l6-8 4 3 4-6 7-6"/><path d="M1 14l5-5 5 3 5-5 6 2" fill="none" stroke="#9a9a9a" stroke-width="1.300"/></g>
<g transform="translate(1518,389)"><path d="M0 23l8-15 8 15z" class="bl"/><path d="M10 12l6-10 7 12v9h-7z" class="gr"/><path d="M1 23l7-20 8 16" class="g"/></g>
<g transform="translate(1553,389)"><path class="g" d="M0 0v23h23"/><path d="M1 3l7 9 7-7 8 9" class="bs"/><path d="M1 10l7 8 7-6 8 6" class="bs"/></g>
<g transform="translate(1588,389)"><path class="g" d="M0 0v23h23"/><path d="M1 2h22v10l-6-4-6 6-10-6z" class="bl"/></g>
<g transform="translate(1623,389)"><path class="g" d="M0 0v23h23"/><rect x="4" y="3" width="4" height="19" class="bl"/><rect x="10" y="10" width="3" height="12" class="gr"/><rect x="15" y="6" width="3" height="16" class="g"/><path d="M1 21l6-8 6 5 8-10" class="g" style="stroke:#ddd"/></g>
<g transform="translate(1658,389)"><path class="g" d="M0 0v23h23"/><rect x="4" y="10" width="5" height="12" class="bl"/><rect x="10" y="3" width="5" height="19" class="g"/><rect x="16" y="8" width="5" height="14" class="gr"/><path d="M1 21l6-8 6 5 9-10" class="g" style="stroke:#ddd"/></g>

<g transform="translate(1483,424)"><path class="g" d="M0 0v23h23"/><path d="M2 3c4 0 4 8 9 8s5-8 11-8v7c-4 0-6 7-10 7s-6-7-10-7z" class="bl"/><path d="M2 9c4 0 4 8 9 8s6-6 11-6" fill="none" stroke="#ccc" stroke-width="2"/><path d="M2 18h20" stroke="#e39b35" stroke-width="2"/></g>
<g transform="translate(1518,424)"><path class="g" d="M0 0v23h23"/><path class="g" d="M3 22V11h6v7h4V8h4V2h5v20" style="stroke-width:1.700"/></g>
<g transform="translate(1553,424)"><path d="M0 1h23v6H0zM4 8h15v7H4zM8 16h7v6H8z" class="bl"/></g>
<g transform="translate(1588,424)"><path class="g" d="M0 0v23h23"/><rect x="4" y="15" width="4" height="4" fill="#ddd"/><rect x="11" y="9" width="4" height="4" class="bl"/><rect x="16" y="2" width="4" height="4" fill="#ddd"/><rect x="17" y="13" width="3" height="3" class="bl"/></g>
<g transform="translate(1623,424)"><circle cx="11.500" cy="11.500" r="10.500" class="g" style="stroke:#ccc"/><path d="M12.500 1a10.500 10.500 0 0 1 9 15l-9-5z" class="bl"/></g>
<g transform="translate(1658,424)"><circle cx="11.500" cy="11.500" r="8.500" fill="none" stroke="#1e78c8" stroke-width="4.500"/><path d="M11.500 0.500a11 11 0 0 0-9 5" fill="none" stroke="#999" stroke-width="2"/></g>

<g transform="translate(1483,459)"><rect width="11" height="13" class="bl"/><rect y="13" width="11" height="10" class="bl"/><rect x="12" width="11" height="8" class="g"/><rect x="12" y="8" width="11" height="8" class="g"/><rect x="12" y="16" width="11" height="7" class="g"/></g>
<g transform="translate(1518,459)"><circle cx="11.500" cy="10" r="8" fill="#166a4a" stroke="#bbb"/><path d="M7 7l4-2 3 4-3 3zM13 12l3 1-2 3z" fill="#111"/><path d="M5 21h13M11.500 18v3M3 8c-2 8 5 13 12 11" class="g"/></g>
<g transform="translate(1553,459)"><path d="M0 2h10v9l-8 6L0 9z" class="gr"/><path d="M12 2h11l-1 10-9 1z" class="gr"/><path d="M3 18l7-6 3 2 9-2-3 7-7 4z" fill="#27548a"/></g>
<g transform="translate(1588,459)"><path d="M12 0l8 23-8-4-11 4z" fill="#1e85d0"/><path d="M12 0v19l8 4z" fill="#0e5e98"/></g>
<g transform="translate(1623,459)"><path d="M1 20c0-16 21-16 21 0" fill="none" stroke="#1e78c8" stroke-width="3"/><path d="M6 19c0-9 11-9 11 0" class="g"/><path d="M11 19l5-6" stroke="#bbb" stroke-width="2"/></g>
<g transform="translate(1658,459)"><rect y="3" width="23" height="17" fill="#222" class="g"/><text x="11.500" y="11.500" class="m" style="font-size:10.500px;fill:#2d8bd4">123</text></g>

<g transform="translate(1483,494)"><rect width="23" height="23" class="g" style="stroke:#bbb"/><path d="M4 6h15" class="bs"/><path d="M4 11h11M4 16h8" class="g"/></g>
<g transform="translate(1518,494)"><rect y="1" width="23" height="19" class="g"/><path d="M4 14l5-7 4 7z" fill="#2ea968"/><path d="M13 6h7l-3 7z" fill="#e04a4a"/><path d="M3 17h17" class="g"/></g>
<g transform="translate(1553,494)"><path class="g" d="M0 0h23v9M0 0v23h11M0 6h23M4 12h5v5H4z"/><path d="M11 11h12l-4 6v6h-4v-6z" fill="#111" stroke="#bbb"/></g>
<g transform="translate(1588,494)"><rect width="23" height="23" class="g"/><path class="g" d="M7.700 0v23M15.300 0v23M0 6h23M0 11.500h23M0 17h23"/></g>
<g transform="translate(1623,494)"><rect width="23" height="23" class="g"/><rect width="23" height="6" class="bl"/><rect y="7" width="7" height="7" class="bl"/><rect x="8" y="7" width="7" height="7" class="bl"/><rect x="16" y="15" width="7" height="7" class="bl"/><rect x="8" y="15" width="7" height="7" class="g"/></g>
<text x="1669.500" y="506" class="b m" style="font-size:19px;fill:#2d8bd4">R</text>

<text x="1494" y="540" class="m" style="font-size:22px;fill:#2d8bd4" textLength="24" lengthAdjust="spacingAndGlyphs">Py</text>
<g transform="translate(1518,529)"><path class="g" d="M0 0v23h23M3 4h13M3 11h7M3 17h11"/><circle cx="18" cy="4" r="2.500" class="bs"/><circle cx="12" cy="11" r="2" fill="#aaa"/><circle cx="16" cy="17" r="2" fill="#aaa"/></g>
<g transform="translate(1553,529)"><rect x="0" y="9" width="8" height="6" class="bl"/><rect x="13" y="1" width="10" height="6" class="bl"/><rect x="13" y="9" width="10" height="6" class="bl"/><rect x="13" y="17" width="10" height="6" class="bl"/><path d="M8 12h5M10.500 4v16M10.500 4h3M10.500 20h3" class="g"/></g>
<g transform="translate(1588,529)"><path d="M1 2h22v15H9l-4 6v-6H1z" fill="none" stroke="#bbb" stroke-width="1.300"/></g>
<g transform="translate(1623,529)"><path d="M3 0h12l6 6v17H3z" class="g"/><path d="M5 12h4" class="bs"/><path d="M11 12h7M5 17h11" class="g"/><path d="M15 0v6h6" class="g"/></g>
<g transform="translate(1658,529)"><path d="M5 1h13v8c0 5-3 7-6.500 7S5 14 5 9z" class="g" style="stroke:#ccc"/><path d="M5 3H1c0 6 2 8 5 9M18 3h4c0 6-2 8-5 9M11.500 16v4" class="g"/><path d="M6 20h11v3H6z" class="bl"/></g>

<g transform="translate(1484,564)"><path d="M1 0h12l7 7v16H1z" class="g" style="stroke:#ddd"/><rect x="5" y="15" width="2.500" height="5" fill="#ddd"/><rect x="9" y="11" width="2.500" height="9" fill="#ddd"/><rect x="13" y="13" width="2.500" height="7" fill="#ddd"/></g>
<g transform="translate(1518,564)"><rect x="3" y="5" width="20" height="15" class="g"/><text x="14" y="12.500" class="m" style="font-size:10px;fill:#aaa">123</text><path d="M7 0L0 11h4l-3 8 8-11H5z" fill="#f0a73a"/></g>
<g transform="translate(1553,564)"><path class="g" d="M4 3h9v9H4zM14 3h9v7h-9z"/><path d="M11 11h12l-4 6v6h-4v-6z" fill="#111" stroke="#bbb"/><path d="M6 0L0 10h4l-2 7 7-10H5z" fill="#f0a73a"/></g>
<g transform="translate(1588,564)"><path d="M4 1h19v15h-8v7H4z" fill="#1e78c8"/><path d="M8 6h12M8 13l7-4 4 6-7 4z" fill="#111"/><path d="M5 0a4 4 0 0 0-4 4c0 3 4 7 4 7s4-4 4-7a4 4 0 0 0-4-4z" fill="#e08a2d"/><circle cx="19" cy="19" r="3.500" fill="#e08a2d"/></g>
<g transform="translate(1623,564)"><path d="M11.500 0l11 11.500L11.500 23 .5 11.500z" fill="none" stroke="#7c3fa8" stroke-width="2"/><path d="M11.500 5l6 6.500-6 6.500-6-6.500z" fill="none" stroke="#7c3fa8" stroke-width="1.700"/></g>
<g transform="translate(1658,564)"><path d="M1 1h11l10 10.500L12 22H1l10-10.500z" fill="none" stroke="#1e78c8" stroke-width="1.800"/><path d="M8 4h5l8 7.500" class="bs"/></g>
<path d="M1488 609h2.500M1493 609h2.500M1498 609h2.500" stroke="#ddd" stroke-width="2.500"/>

<!-- viz wells -->
<text x="1484" y="655" textLength="42" lengthAdjust="spacingAndGlyphs">Values</text>
<rect x="1474.500" y="672.500" width="212" height="34" fill="none" stroke="#666" stroke-dasharray="3 2"/>
<text x="1488" y="689" textLength="133" lengthAdjust="spacingAndGlyphs">Add data fields here</text>
<text x="1484" y="730" class="b" textLength="87" lengthAdjust="spacingAndGlyphs" style="fill:#eee">Drill through</text>
<text x="1484" y="762" textLength="83" lengthAdjust="spacingAndGlyphs">Cross-report</text>
<rect x="1627.500" y="752.500" width="39" height="19" rx="9.500" fill="none" stroke="#999" stroke-width="1.200"/><circle cx="1638" cy="762" r="5" fill="#bbb"/>
<text x="1645" y="762" textLength="17" lengthAdjust="spacingAndGlyphs" style="font-size:11.500px;fill:#bbb">Off</text>
<text x="1484" y="795" textLength="92" lengthAdjust="spacingAndGlyphs">Keep all filters</text>
<rect x="1627" y="786" width="40" height="20" rx="10" fill="#2ab59b"/><circle cx="1656" cy="796" r="5" fill="#222"/>
<text x="1632" y="796" textLength="15" lengthAdjust="spacingAndGlyphs" style="font-size:11.500px;fill:#0d6b58">On</text>
<rect x="1474.500" y="818.500" width="212" height="31" fill="#000" stroke="#666" stroke-dasharray="3 2"/>
<text x="1485" y="835" textLength="188" lengthAdjust="spacingAndGlyphs" style="fill:#eee">Add drill-through fields here</text>

<!-- data panel -->
<rect x="1700.500" y="270.500" width="214" height="29.500" rx="4" fill="#1c1c1c" stroke="#6a6a6a"/>
<circle cx="1723" cy="284" r="6" class="s" style="stroke:#bbb"/><path d="M1727.500 288.500l5 5" stroke="#bbb" stroke-width="1.300"/>
<text x="1743" y="285.500" textLength="51" lengthAdjust="spacingAndGlyphs" style="font-size:16px;fill:#9a9a9a">Search</text>
<path d="M1714.500 324l4.500 5 4.500-5" fill="none" stroke="#ccc" stroke-width="1.400"/>
<use href="#calc" x="1731" y="318" width="16" height="18"/>
<text x="1754" y="328" textLength="101" lengthAdjust="spacingAndGlyphs">Measures Table</text>
<g fill="none" stroke="#8a8a8a"><rect x="1750.500" y="349.500" width="14" height="14" rx="2"/><rect x="1750.500" y="379.500" width="14" height="14" rx="2"/><rect x="1750.500" y="409.500" width="14" height="14" rx="2"/><rect x="1750.500" y="439.500" width="14" height="14" rx="2"/><rect x="1750.500" y="469.500" width="14" height="14" rx="2"/><rect x="1750.500" y="499.500" width="14" height="14" rx="2"/></g>
<use href="#calc" x="1775" y="347" width="16" height="18"/><use href="#calc" x="1775" y="377" width="16" height="18"/><use href="#calc" x="1775" y="407" width="16" height="18"/><use href="#calc" x="1775" y="437" width="16" height="18"/><use href="#calc" x="1775" y="467" width="16" height="18"/><use href="#calc" x="1775" y="497" width="16" height="18"/>
<text x="1798" y="357" textLength="112" lengthAdjust="spacingAndGlyphs">Average Satisfa...</text>
<text x="1798" y="387" textLength="97" lengthAdjust="spacingAndGlyphs">Senior Citizens</text>
<text x="1798" y="417" textLength="115" lengthAdjust="spacingAndGlyphs">Total Churn Cus...</text>
<text x="1798" y="447" textLength="106" lengthAdjust="spacingAndGlyphs">Total Customers</text>
<text x="1798" y="477" textLength="92" lengthAdjust="spacingAndGlyphs">Total Revenue</text>
<text x="1798" y="507" textLength="61" lengthAdjust="spacingAndGlyphs">Under 30</text>
<g fill="none" stroke="#ccc" stroke-width="1.400"><path d="M1717 532l5 5-5 5M1717 562l5 5-5 5M1717 592l5 5-5 5M1717 622l5 5-5 5M1717 652l5 5-5 5M1717 682l5 5-5 5M1717 712l5 5-5 5"/></g>
<use href="#tbl" x="1730.500" y="528" width="17" height="17"/><use href="#tbl" x="1730.500" y="558" width="17" height="17"/><use href="#tbl" x="1730.500" y="588" width="17" height="17"/><use href="#tbl" x="1730.500" y="618" width="17" height="17"/><use href="#tbl" x="1730.500" y="648" width="17" height="17"/><use href="#tbl" x="1730.500" y="678" width="17" height="17"/><use href="#tbl" x="1730.500" y="708" width="17" height="17"/>
<text x="1754" y="537" textLength="96" lengthAdjust="spacingAndGlyphs">Customer_Info</text>
<text x="1754" y="567" textLength="93" lengthAdjust="spacingAndGlyphs">Location_Data</text>
<text x="1754" y="597" textLength="102" lengthAdjust="spacingAndGlyphs">Online_Services</text>
<text x="1754" y="627" textLength="89" lengthAdjust="spacingAndGlyphs">Payment_Info</text>
<text x="1754" y="657" textLength="105" lengthAdjust="spacingAndGlyphs">Service_Options</text>
<text x="1754" y="687" textLength="99" lengthAdjust="spacingAndGlyphs">Status_Analysis</text>
<text x="1754" y="717" textLength="79" lengthAdjust="spacingAndGlyphs">Telco_Churn</text>

<!-- watermark -->
<g opacity=".92">
<text x="959" y="936" class="m b" direction="rtl" textLength="211" lengthAdjust="spacingAndGlyphs" style="font-family:'DejaVu Sans','Noto Sans CJK SC',sans-serif;font-size:62px;fill:#cfcfcf">نفذلي</text>
<circle cx="876" cy="975" r="6.500" fill="#cfcfcf"/><circle cx="891" cy="975" r="6.500" fill="#cfcfcf"/>
<text x="960" y="998" class="m" textLength="196" lengthAdjust="spacingAndGlyphs" style="font-size:32px;fill:#d2d2d2;stroke:#d2d2d2;stroke-width:1">nafezly.com</text>
</g>
</svg>
</body></html>
